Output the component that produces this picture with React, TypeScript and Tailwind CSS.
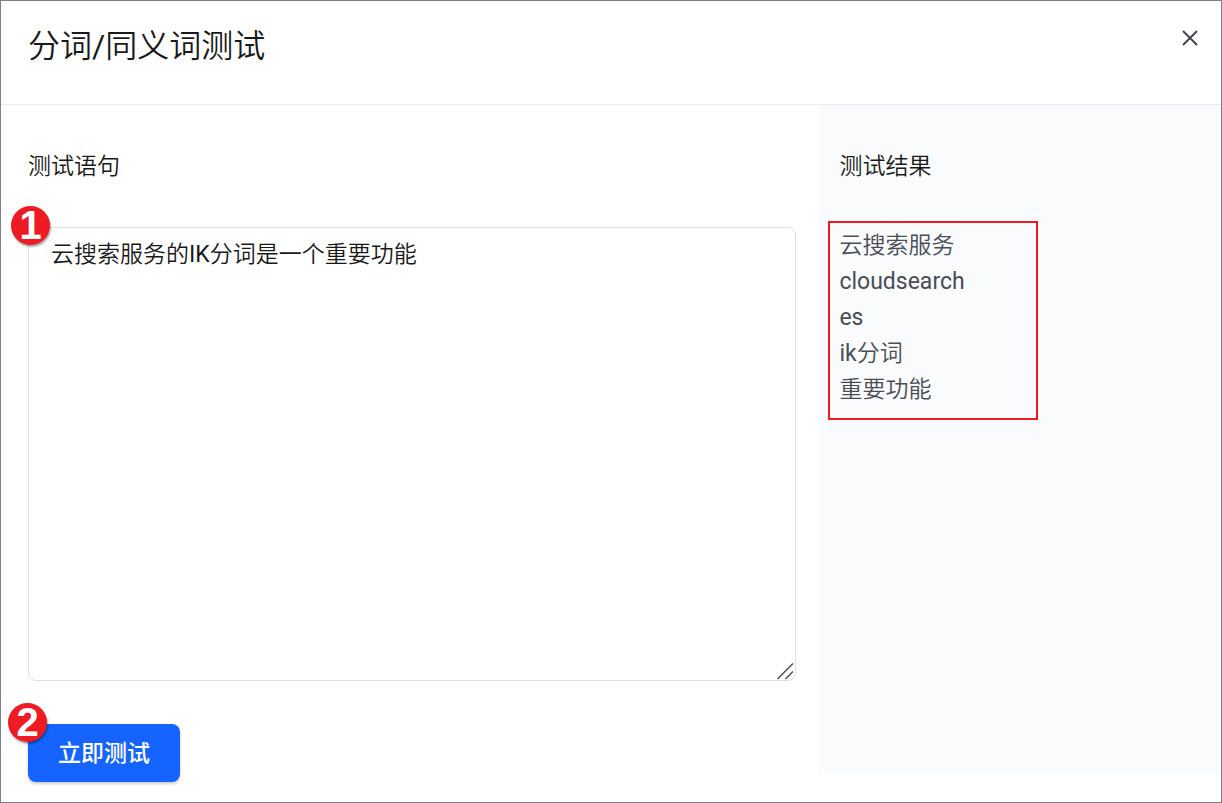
import { useState } from "react";

const initialTokens: string[] = ["云搜索服务", "cloudsearch", "es", "ik分词", "重要功能"];

function StepBadge({ step, className }: { step: number; className: string }) {
  return (
    <span
      aria-hidden="true"
      className={`absolute flex size-[39px] items-center justify-center rounded-full bg-[#ed1c24] pb-0.5 font-['Liberation_Sans',sans-serif] text-[40px] leading-9 font-bold text-white shadow-[1px_2px_2px_rgba(0,0,0,0.35)] ${className}`}
    >
      {step}
    </span>
  );
}

function CloseIcon() {
  return (
    <svg viewBox="0 0 16 16" className="size-4" fill="none" stroke="#40444d" strokeWidth="1.9" aria-hidden="true">
      <path d="M1 1 15 15M15 1 1 15" />
    </svg>
  );
}

function ResizeGrip() {
  return (
    <svg
      viewBox="0 0 18 18"
      className="pointer-events-none absolute right-0.5 bottom-px size-[18px]"
      fill="none"
      stroke="#555555"
      strokeWidth="1.6"
      aria-hidden="true"
    >
      <path d="M1.5 17 17 1.5M9.5 17 17 9.5" />
    </svg>
  );
}

export default function App() {
  const [sentence, setSentence] = useState("云搜索服务的IK分词是一个重要功能");

  return (
    <section
      aria-labelledby="dialog-title"
      className="flex min-h-screen flex-col border border-[#808080] bg-white font-['Roboto','Noto_Sans_CJK_SC_DemiLight','Noto_Sans_CJK_SC',sans-serif] text-[23px] leading-9 text-[#191919]"
    >
      <header className="flex items-start justify-between border-b border-[#e9ebf1] pt-[21px] pr-[15px] pb-[34px] pl-[27px]">
        <h1 id="dialog-title" className="text-[32px] leading-12">
          分词/同义词测试
        </h1>
        <button type="button" aria-label="关闭" className="flex size-8 items-center justify-center">
          <CloseIcon />
        </button>
      </header>

      <div className="flex grow">
        <form
          className="flex min-w-0 grow flex-col items-start pt-11 pr-[22px] pb-5 pl-[27px]"
          onSubmit={(e) => e.preventDefault()}
        >
          <label htmlFor="sentence">测试语句</label>
          <div className="relative mt-[42px] mb-[43px] w-full">
            <textarea
              id="sentence"
              value={sentence}
              onChange={(e) => setSentence(e.target.value)}
              className="block h-[454px] w-full resize-none rounded-lg border border-[#dfe1e6] bg-white px-[22px] py-[9px] outline-none"
            />
            <ResizeGrip />
            <StepBadge step={1} className="-top-[21px] -left-[17px]" />
          </div>
          <div className="relative">
            <button
              type="submit"
              className="block rounded-lg bg-[#1664ff] px-[30px] pt-3 pb-2.5 font-['Roboto','Noto_Sans_CJK_SC',sans-serif] font-medium text-white shadow-[0_2px_3px_rgba(0,0,0,0.2)]"
            >
              立即测试
            </button>
            <StepBadge step={2} className="-top-[21px] -left-5" />
          </div>
        </form>

        <aside className="mb-7 flex w-[33%] shrink-0 flex-col gap-[43px] bg-[#fafbfd] pt-11 pl-[21px]">
          <h2>测试结果</h2>
          <div className="relative">
            <ul className="text-[#494d56]">
              {initialTokens.map((token) => (
                <li key={token}>{token}</li>
              ))}
            </ul>
            <div className="pointer-events-none absolute -top-[7px] -left-[11px] h-[199px] w-[210px] border-2 border-[#ed1c24]" />
          </div>
        </aside>
      </div>
    </section>
  );
}
